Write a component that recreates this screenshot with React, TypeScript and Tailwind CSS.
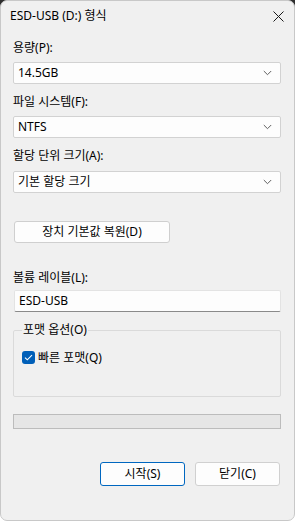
import React from "react";

const font = { fontFamily: '"Segoe UI", "Noto Sans", "Noto Sans CJK KR", sans-serif' };

function Chevron() {
  return (
    <svg width="9" height="6" viewBox="0 0 9 6" className="shrink-0">
      <path d="M0.8 1 L4.5 4.7 L8.2 1" fill="none" stroke="#5f5f5f" strokeWidth="1" />
    </svg>
  );
}

function Combo({ value, className = "" }: { value: string; className?: string }) {
  return (
    <div
      className={`h-[22px] flex items-center justify-between pl-[4px] pr-[8px] bg-[#fdfdfd] border border-[#d2d2d2] rounded-[2px] text-[12px] text-black ${className}`}
    >
      <span className="leading-none">{value}</span>
      <Chevron />
    </div>
  );
}

function Label({ children, className = "" }: { children: React.ReactNode; className?: string }) {
  return <div className={`h-[16px] leading-[16px] text-[12px] text-black ${className}`}>{children}</div>;
}

export default function App() {
  return (
    <div
      className="w-[295px] h-[521px] bg-[linear-gradient(to_bottom,#2e2e2e_0,#2e2e2e_360px,#ffffff_360px)]"
      style={font}
    >
      <div className="w-[295px] h-[521px] bg-[#f0f0f0] rounded-[7px] border border-[#c8c8c8] flex flex-col overflow-hidden">
        <div className="h-[30px] flex items-center justify-between pl-[9px] pr-[10px] shrink-0">
          <span className="text-[12px] text-black leading-none">ESD-USB (D:) 형식</span>
          <svg width="11" height="11" viewBox="0 0 11 11">
            <path d="M0.5 0.5 L10.5 10.5 M10.5 0.5 L0.5 10.5" stroke="#1a1a1a" strokeWidth="1" />
          </svg>
        </div>
        <div className="flex flex-col pl-[12px] pr-[13px]">
          <Label className="mt-[9px]">용량(P):</Label>
          <Combo value="14.5GB" className="mt-[6px]" />
          <Label className="mt-[10px]">파일 시스템(F):</Label>
          <Combo value="NTFS" className="mt-[6px]" />
          <Label className="mt-[10px]">할당 단위 크기(A):</Label>
          <Combo value="기본 할당 크기" className="mt-[7px]" />
          <div className="mt-[28px] ml-[1px] w-[156px] h-[22px] flex items-center justify-center bg-[#fdfdfd] border border-[#cfcfcf] rounded-[3px] text-[12px] text-black">
            장치 기본값 복원(D)
          </div>
          <Label className="mt-[27px]">볼륨 레이블(L):</Label>
          <div className="mt-[4px] ml-[1px] h-[22px] flex items-center pl-[4px] bg-[#fdfdfd] border border-[#e3e3e3] border-b-[#8a8a8a] rounded-[2px] text-[12px] text-black">
            ESD-USB
          </div>
          <fieldset className="mt-[10px] border border-[#dadada] rounded-[2px] h-[75px]">
            <legend className="ml-[8px] px-[1px] h-[16px] leading-[16px] text-[12px] text-black">포맷 옵션(O)</legend>
            <div className="mt-[13px] ml-[8px] flex items-center gap-[3px]">
              <div className="w-[13px] h-[13px] rounded-[3px] bg-[#005fb8] flex items-center justify-center">
                <svg width="9" height="7" viewBox="0 0 9 7">
                  <path d="M1 3.6 L3.3 5.8 L8 1.2" fill="none" stroke="#ffffff" strokeWidth="1.1" />
                </svg>
              </div>
              <span className="text-[12px] text-black leading-none">빠른 포맷(Q)</span>
            </div>
          </fieldset>
          <div className="mt-[17px] h-[15px] bg-[#e6e6e6] border border-[#bcbcbc]" />
          <div className="mt-[33px] flex justify-end gap-[10px] pr-[1px]">
            <div className="w-[85px] h-[24px] flex items-center justify-center bg-[#fdfdfd] border border-[#0067c0] rounded-[3px] text-[12px] text-black">
              시작(S)
            </div>
            <div className="w-[85px] h-[24px] flex items-center justify-center bg-[#fdfdfd] border border-[#d0d0d0] rounded-[3px] text-[12px] text-black">
              닫기(C)
            </div>
          </div>
        </div>
      </div>
    </div>
  );
}
